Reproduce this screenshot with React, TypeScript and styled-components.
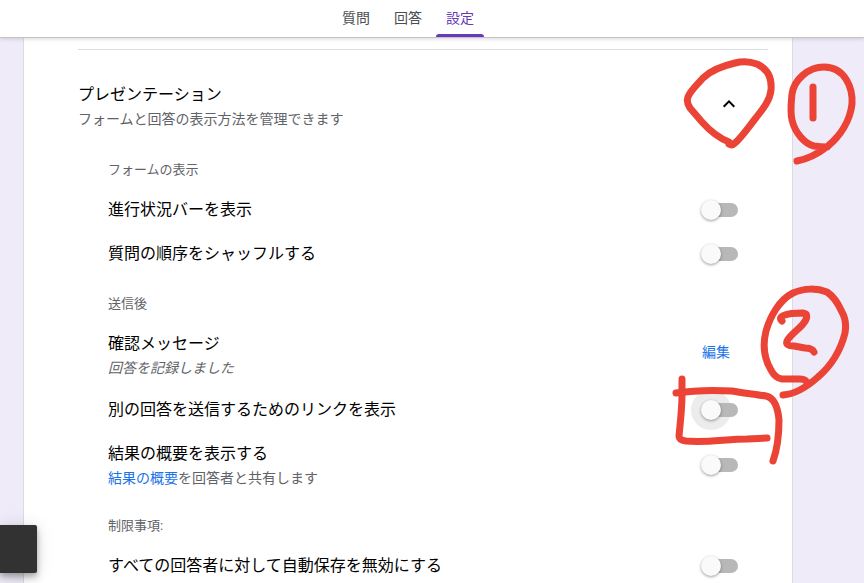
import React, { useState } from 'react';
import styled, { createGlobalStyle, css } from 'styled-components';

const GlobalStyle = createGlobalStyle`
  *, *::before, *::after { box-sizing: border-box; }
  body {
    margin: 0;
    background: #f0ebf8;
    font-family: Roboto, "Noto Sans CJK JP", sans-serif;
    color: #000;
  }
  button, input { font: inherit; }
`;

const Shell = styled.div`
  position: relative;
  display: flex;
  flex-direction: column;
  height: 100vh;
  overflow: hidden;
`;

const TopBar = styled.header`
  position: relative;
  z-index: 1;
  display: flex;
  justify-content: center;
  flex: none;
  padding-right: 48px;
  background: #fff;
  border-bottom: 1px solid #c4c4c6;
  box-shadow: 0 1px 4px rgba(0, 0, 0, 0.15);
`;

const Tabs = styled.nav`
  display: flex;
  gap: 4px;
`;

const Tab = styled.button<{ $active?: boolean }>`
  position: relative;
  width: 48px;
  height: 37px;
  padding: 0;
  border: 0;
  background: none;
  color: ${(p) => (p.$active ? '#673ab7' : '#4a4e52')};
  font-size: 14px;
  line-height: 37px;
  cursor: pointer;

  ${(p) =>
    p.$active &&
    css`
      &::after {
        content: '';
        position: absolute;
        left: 0;
        right: 0;
        bottom: 0;
        height: 3px;
        border-radius: 3px 3px 0 0;
        background: #673ab7;
      }
    `}
`;

const Content = styled.main`
  flex: 1;
  display: flex;
  justify-content: center;
  padding: 0 71px 0 23px;
`;

const Card = styled.section`
  flex: 1;
  max-width: 770px;
  padding: 11px 24px 0 54px;
  background: #fff;
  border: solid #dadce0;
  border-width: 0 1px;
`;

const Divider = styled.hr`
  height: 1px;
  margin: 0;
  border: 0;
  background: #dadce0;
`;

const Row = styled.div<{ $tall?: boolean }>`
  display: flex;
  align-items: center;
  justify-content: space-between;
  height: ${(p) => (p.$tall ? 66 : 44)}px;
`;

const SectionHeader = styled(Row)`
  margin-top: 23px;
  padding-right: 27px;
`;

const Group = styled.div`
  padding: 0 30px;
`;

const Texts = styled.div<{ $tall?: boolean }>`
  display: flex;
  flex-direction: column;
  padding-top: ${(p) => (p.$tall ? 2 : 0)}px;
`;

const Title = styled.label`
  font-size: 16px;
  line-height: 24px;
`;

const SectionTitle = styled.h2`
  margin: 0;
  font-size: 16px;
  font-weight: 400;
  line-height: 24px;
`;

const Hint = styled.div<{ $italic?: boolean }>`
  color: #5f6368;
  font-size: 14px;
  font-style: ${(p) => (p.$italic ? 'italic' : 'normal')};
  line-height: 24px;
`;

const HintLink = styled.a`
  color: #1a73e8;
  text-decoration: none;
`;

const Subhead = styled.h3`
  height: 46px;
  margin: 0;
  padding-top: 16px;
  color: #5f6368;
  font-size: 13px;
  font-weight: 400;
  line-height: 24px;
`;

const FirstSubhead = styled(Subhead)`
  height: 49px;
  padding-top: 19px;
`;

const IconButton = styled.button`
  display: grid;
  place-items: center;
  width: 24px;
  height: 24px;
  margin-bottom: 4px;
  padding: 0;
  border: 0;
  background: none;
  cursor: pointer;
`;

const EditButton = styled.button`
  margin-bottom: 6px;
  padding: 0 8px;
  border: 0;
  background: none;
  color: #1a73e8;
  font-size: 14px;
  line-height: 24px;
  cursor: pointer;
`;

const ToggleFrame = styled.span`
  display: flex;
  isolation: isolate;
`;

const Toggle = styled.input<{ $halo?: boolean }>`
  position: relative;
  appearance: none;
  width: 36px;
  height: 14px;
  margin: 0;
  border-radius: 7px;
  background: #b8b8b8;
  cursor: pointer;

  ${(p) =>
    p.$halo &&
    css`
      &::before {
        content: '';
        position: absolute;
        z-index: -1;
        top: -13px;
        left: -11px;
        width: 40px;
        height: 40px;
        border-radius: 50%;
        background: #ececec;
      }
    `}

  &::after {
    content: '';
    position: absolute;
    top: -3px;
    left: -1px;
    width: 20px;
    height: 20px;
    border-radius: 50%;
    background: #fafafa;
    box-shadow: 0 1px 3px rgba(0, 0, 0, 0.4);
  }

  &:checked { background: #b39ddb; }
  &:checked::after { left: 17px; background: #673ab7; }
`;

const Snackbar = styled.div`
  position: absolute;
  left: 0;
  bottom: 10px;
  z-index: 2;
  width: 37px;
  height: 48px;
  border-radius: 0 2px 2px 0;
  background: #323232;
  box-shadow: 0 6px 10px rgba(0, 0, 0, 0.14), 0 1px 18px rgba(0, 0, 0, 0.12), 0 3px 5px rgba(0, 0, 0, 0.2);
`;

const Ink = styled.svg`
  position: absolute;
  top: 0;
  left: 0;
  z-index: 3;
  pointer-events: none;
`;

function ToggleRow({ id, label, halo, children }: {
  id: string;
  label: string;
  halo?: boolean;
  children?: React.ReactNode;
}) {
  const [on, setOn] = useState(false);
  const tall = Boolean(children);
  return (
    <Row $tall={tall}>
      <Texts $tall={tall}>
        <Title htmlFor={id}>{label}</Title>
        {children}
      </Texts>
      <ToggleFrame>
        <Toggle id={id} type="checkbox" role="switch" $halo={halo} checked={on} onChange={() => setOn(!on)} />
      </ToggleFrame>
    </Row>
  );
}

function HandDrawnMarks() {
  return (
    <Ink width="864" height="583" viewBox="0 0 864 583" fill="none" stroke="#eb4335" strokeWidth="7" strokeLinecap="round" strokeLinejoin="round" aria-hidden="true">
      <path d="M729 142C719 138 710 131 702 122L690 108Q686 102 688 97C690 91 697 85 703 78C710 71 722 66 735 63Q746 60 757 64C768 69 772 78 771 90C770 101 762 110 755 119C748 128 741 138 735 143Q732 146 729 144" />
      <path d="M797 161C808 159 819 153 828 146C840 136 850 121 852 104C853 88 845 67 824 67C808 67 794 80 792 94C791 104 790 112 792 120C795 133 805 144 814 146Q821 147 827 147" />
      <path d="M813 87V100L813 118" />
      <path d="M783 395C797 394 808 386 818 377C832 365 841 349 845 333Q847 321 842 312C838 303 833 296 827 292C817 288 804 288 793 293C779 300 770 317 766 331C762 347 765 360 771 370Q775 378 782 379H800Q806 379 807 383" />
      <path d="M782 321Q778 317 785 315C790 313 797 313 803 313C809 314 807 319 803 324C798 330 790 335 787 341Q785 346 794 346L805 348Q812 348 814 352" />
      <path d="M682 379V394C682 410 680 425 679 436Q679 440 686 441C706 443 727 439 747 439L767 438" />
      <path d="M676 393C696 390 714 390 732 391C743 393 754 394 766 396C775 398 778 409 779 420C779 435 777 450 773 461" />
    </Ink>
  );
}

export default function App() {
  return (
    <>
      <GlobalStyle />
      <Shell lang="ja">
        <TopBar>
          <Tabs>
            <Tab>質問</Tab>
            <Tab>回答</Tab>
            <Tab $active aria-current="page">設定</Tab>
          </Tabs>
        </TopBar>
        <Content>
          <Card>
            <Divider />
            <SectionHeader $tall>
              <Texts $tall>
                <SectionTitle>プレゼンテーション</SectionTitle>
                <Hint>フォームと回答の表示方法を管理できます</Hint>
              </Texts>
              <IconButton aria-label="折りたたむ" aria-expanded="true">
                <svg width="24" height="24" viewBox="0 0 24 24" fill="none" stroke="#000" strokeWidth="2">
                  <path d="M6.7 14.7 12 9.4l5.3 5.3" />
                </svg>
              </IconButton>
            </SectionHeader>
            <Group>
              <FirstSubhead>フォームの表示</FirstSubhead>
              <ToggleRow id="progress" label="進行状況バーを表示" />
              <ToggleRow id="shuffle" label="質問の順序をシャッフルする" />
              <Subhead>送信後</Subhead>
              <Row $tall>
                <Texts $tall>
                  <Title as="div">確認メッセージ</Title>
                  <Hint $italic>回答を記録しました</Hint>
                </Texts>
                <EditButton>編集</EditButton>
              </Row>
              <ToggleRow id="another" label="別の回答を送信するためのリンクを表示" halo />
              <ToggleRow id="summary" label="結果の概要を表示する">
                <Hint>
                  <HintLink href="#summary">結果の概要</HintLink>を回答者と共有します
                </Hint>
              </ToggleRow>
              <Subhead>制限事項:</Subhead>
              <ToggleRow id="autosave" label="すべての回答者に対して自動保存を無効にする" />
            </Group>
          </Card>
        </Content>
        <Snackbar role="status" />
        <HandDrawnMarks />
      </Shell>
    </>
  );
}
